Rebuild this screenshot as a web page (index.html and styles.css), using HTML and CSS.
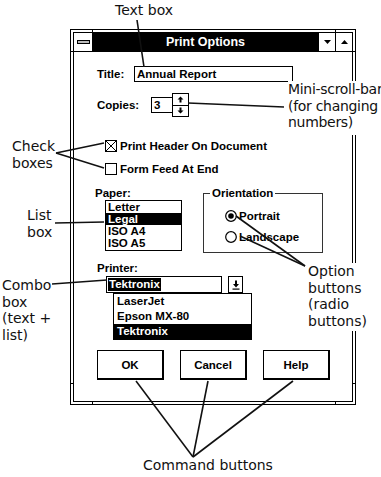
FILE: index.html
```html
<!DOCTYPE html>
<html>
  <head>
    <meta charset="UTF-8" />
    <title>Print Options</title>
    <link rel="stylesheet" href="styles.css">
  </head>
  <body>
    <div class="stage">
      <div class="window">
        <!-- resize frame corner marks -->
        <span class="tick tick-h tick-l" style="top:21px"></span>
        <span class="tick tick-h tick-r" style="top:21px"></span>
        <span class="tick tick-h tick-l" style="top:353px"></span>
        <span class="tick tick-h tick-r" style="top:353px"></span>
        <span class="tick tick-v tick-t" style="left:21px"></span>
        <span class="tick tick-v tick-t" style="left:264px"></span>
        <span class="tick tick-v tick-b" style="left:21px"></span>
        <span class="tick tick-v tick-b" style="left:264px"></span>

        <div class="frame">
          <div class="titlebar">
            <div class="sysmenu"><span class="sysbar"></span></div>
            <div class="caption">Print Options</div>
            <div class="tbtn">
              <svg width="7" height="4" viewBox="0 0 7 4"><polygon points="0,0 7,0 3.5,4" fill="#000"/></svg>
            </div>
            <div class="tbtn">
              <svg width="7" height="4" viewBox="0 0 7 4"><polygon points="0,4 7,4 3.5,0" fill="#000"/></svg>
            </div>
          </div>

          <div class="client">
            <div class="row-title">
              <span class="lbl-title">Title:</span>
              <div class="edit edit-title">Annual Report</div>
            </div>

            <div class="row-copies">
              <span class="lbl-copies">Copies:</span>
              <div class="edit edit-copies">3</div>
              <div class="spin">
                <span class="spin-half">
                  <svg width="7" height="7" viewBox="0 0 7 7"><path d="M3.5 0.5 L6.5 3.5 H4.5 V6.5 H2.5 V3.5 H0.5 Z" fill="#000"/></svg>
                </span>
                <span class="spin-half">
                  <svg width="7" height="7" viewBox="0 0 7 7"><path d="M3.5 6.5 L6.5 3.5 H4.5 V0.5 H2.5 V3.5 H0.5 Z" fill="#000"/></svg>
                </span>
              </div>
            </div>

            <div class="check-row first">
              <svg class="checkbox" width="12" height="12" viewBox="0 0 12 12">
                <rect x="0.5" y="0.5" width="11" height="11" fill="#fff" stroke="#000"/>
                <path d="M1 1 L11 11 M11 1 L1 11" stroke="#000" stroke-width="1"/>
              </svg>
              Print Header On Document
            </div>
            <div class="check-row">
              <svg class="checkbox" width="12" height="12" viewBox="0 0 12 12">
                <rect x="0.5" y="0.5" width="11" height="11" fill="#fff" stroke="#000"/>
              </svg>
              Form Feed At End
            </div>

            <div class="row-paper">
              <div class="paper">
                <div class="lbl-paper">Paper:</div>
                <ul class="listbox">
                  <li>Letter</li>
                  <li class="sel">Legal</li>
                  <li>ISO A4</li>
                  <li>ISO A5</li>
                </ul>
              </div>
              <div class="group">
                <div class="group-label">Orientation</div>
                <div class="radio-row first">
                  <svg class="radio" width="12" height="12" viewBox="0 0 12 12">
                    <circle cx="6" cy="6" r="5.3" fill="#fff" stroke="#000" stroke-width="1.2"/>
                    <circle cx="6" cy="6" r="2.8" fill="#000"/>
                  </svg>
                  Portrait
                </div>
                <div class="radio-row">
                  <svg class="radio" width="12" height="12" viewBox="0 0 12 12">
                    <circle cx="6" cy="6" r="5.3" fill="#fff" stroke="#000" stroke-width="1.2"/>
                  </svg>
                  Landscape
                </div>
              </div>
            </div>

            <div class="lbl-printer">Printer:</div>
            <div class="combo">
              <div class="edit combo-edit"><span class="hl">Tektronix</span></div>
              <div class="combo-btn">
                <svg width="8" height="10" viewBox="0 0 8 10">
                  <path d="M3 0.5 H5 V4 H7 L4 7.5 L1 4 H3 Z" fill="#000"/>
                  <rect x="0.5" y="8.5" width="7" height="1.2" fill="#000"/>
                </svg>
              </div>
            </div>
            <ul class="dropdown">
              <li>LaserJet</li>
              <li>Epson MX-80</li>
              <li class="sel">Tektronix</li>
            </ul>

            <div class="buttons">
              <div class="btn">OK</div>
              <div class="btn">Cancel</div>
              <div class="btn">Help</div>
            </div>
          </div>
        </div>
      </div>

      <!-- callout labels -->
      <div class="note note-textbox">Text box</div>
      <div class="note note-spin">Mini-scroll-bar<br>(for changing<br>numbers)</div>
      <div class="note note-check">Check<br>boxes</div>
      <div class="note note-list">List<br>box</div>
      <div class="note note-option">Option<br>buttons<br>(radio<br>buttons)</div>
      <div class="note note-combo">Combo<br>box<br>(text +<br>list)</div>
      <div class="note note-command">Command buttons</div>

      <svg class="leaders" width="381" height="477" viewBox="0 0 381 477">
        <g stroke="#111" stroke-width="1.6" fill="none">
          <line x1="137" y1="20" x2="144" y2="67"/>
          <line x1="188" y1="103" x2="284" y2="107"/>
          <line x1="56" y1="153" x2="104" y2="143"/>
          <line x1="56" y1="153" x2="104" y2="168"/>
          <line x1="55" y1="223" x2="104" y2="222"/>
          <line x1="305" y1="266" x2="236" y2="216"/>
          <line x1="305" y1="266" x2="240" y2="236"/>
          <line x1="52" y1="284" x2="107" y2="280"/>
          <line x1="193" y1="457" x2="136" y2="381"/>
          <line x1="193" y1="457" x2="208" y2="381"/>
          <line x1="193" y1="457" x2="293" y2="381"/>
        </g>
      </svg>
    </div>
  </body>
</html>
```

FILE: styles.css
```css
body {
    margin: 0;
    padding: 0;
    background-color: #fff;
    color: #000;
    font-family: "Liberation Sans", Arial, sans-serif;
}

.stage {
    position: relative;
    width: 381px;
    height: 477px;
    box-sizing: border-box;
    padding: 29px 0 0 70px;
    overflow: hidden;
}

/* window frame */
.window {
    position: relative;
    width: 286px;
    height: 376px;
    box-sizing: border-box;
    border: 1px solid #000;
    padding: 2px;
    background-color: #fff;
}

.frame {
    height: 100%;
    box-sizing: border-box;
    border: 1px solid #000;
    display: flex;
    flex-direction: column;
}

.tick {
    position: absolute;
    background-color: #000;
}

.tick-h {
    width: 4px;
    height: 1px;
}

.tick-v {
    width: 1px;
    height: 4px;
}

.tick-l { left: -1px; }
.tick-r { right: -1px; }
.tick-t { top: -1px; }
.tick-b { bottom: -1px; }

/* title bar */
.titlebar {
    display: flex;
    align-items: flex-start;
    height: 19px;
    background-color: #000;
}

.sysmenu {
    width: 18px;
    height: 18px;
    background-color: #fff;
    border-right: 1px solid #000;
    display: flex;
    align-items: center;
    justify-content: center;
}

.sysbar {
    width: 11px;
    height: 2px;
    border: 1px solid #000;
    background-color: #bbb;
}

.caption {
    flex: 1;
    color: #fff;
    font-weight: bold;
    font-size: 12.5px;
    line-height: 18px;
    text-align: center;
}

.tbtn {
    width: 16px;
    height: 18px;
    background-color: #fff;
    border-left: 1px solid #000;
    display: flex;
    align-items: center;
    justify-content: center;
}

/* dialog contents */
.client {
    padding-left: 23px;
    font-weight: bold;
    font-size: 11.5px;
}

.edit {
    height: 16px;
    box-sizing: border-box;
    border: 1px solid #000;
    line-height: 14px;
    padding-left: 2px;
}

.row-title {
    margin-top: 14px;
    height: 16px;
    display: flex;
    align-items: center;
}

.lbl-title {
    width: 37px;
}

.edit-title {
    width: 159px;
}

.row-copies {
    margin-top: 11px;
    height: 24px;
    display: flex;
    align-items: center;
}

.lbl-copies {
    width: 54px;
}

.edit-copies {
    width: 22px;
}

.spin {
    width: 17px;
    height: 24px;
    margin-left: -1px;
    box-sizing: border-box;
    border: 1px solid #000;
    display: flex;
    flex-direction: column;
}

.spin-half {
    flex: 1;
    display: flex;
    align-items: center;
    justify-content: center;
}

.spin-half + .spin-half {
    border-top: 1px solid #000;
}

.check-row {
    height: 12px;
    margin-top: 11px;
    padding-left: 8px;
    display: flex;
    align-items: center;
}

.check-row.first {
    margin-top: 23px;
}

.checkbox {
    margin-right: 3px;
}

.row-paper {
    margin-top: 11px;
    display: flex;
    align-items: flex-start;
}

.paper {
    width: 106px;
}

.lbl-paper {
    height: 14px;
    line-height: 14px;
    margin-left: -2px;
}

.listbox {
    margin: 0 0 0 8px;
    padding: 0;
    list-style: none;
    width: 77px;
    height: 51px;
    box-sizing: border-box;
    border: 1px solid #000;
}

.listbox li {
    height: 12px;
    line-height: 12px;
    padding-left: 2px;
}

.sel {
    background-color: #000;
    color: #fff;
}

.group {
    margin-top: 7px;
    width: 120px;
    height: 60px;
    box-sizing: border-box;
    border: 1px solid #333;
    padding-left: 6px;
}

.group-label {
    width: fit-content;
    margin-top: -8px;
    padding: 0 2px;
    height: 14px;
    line-height: 14px;
    background-color: #fff;
}

.radio-row {
    height: 12px;
    margin-top: 9px;
    margin-left: 15px;
    display: flex;
    align-items: center;
}

.radio-row.first {
    margin-top: 10px;
}

.radio {
    margin-right: 2px;
}

.lbl-printer {
    margin-top: 8px;
    height: 14px;
    line-height: 14px;
}

.combo {
    margin-top: 1px;
    padding-left: 9px;
    height: 17px;
    display: flex;
}

.combo-edit {
    width: 116px;
    height: 17px;
    padding: 1px;
    line-height: 13px;
}

.hl {
    display: inline-block;
    background-color: #000;
    color: #fff;
    padding: 0 1px;
}

.combo-btn {
    margin-left: 6px;
    width: 15px;
    height: 17px;
    box-sizing: border-box;
    border: 1px solid #000;
    display: flex;
    align-items: center;
    justify-content: center;
}

.dropdown {
    margin: 0 0 0 16px;
    padding: 0;
    list-style: none;
    width: 139px;
    height: 47px;
    box-sizing: border-box;
    border: 1px solid #000;
}

.dropdown li {
    height: 15px;
    line-height: 15px;
    padding-left: 3px;
}

.buttons {
    margin-top: 10px;
    display: flex;
    gap: 16px;
}

.btn {
    width: 67px;
    height: 30px;
    box-sizing: border-box;
    border: 1px solid #000;
    border-width: 1px 2px 2px 1px;
    display: flex;
    align-items: center;
    justify-content: center;
}

/* callouts */
.note {
    position: absolute;
    font-family: "DejaVu Sans", "Liberation Sans", sans-serif;
    font-size: 14px;
    line-height: 16.5px;
    color: #111;
    background-color: #fff;
    white-space: nowrap;
}

.note-textbox { left: 115px; top: 2px; }
.note-spin { left: 288px; top: 81px; padding-bottom: 4px; letter-spacing: -0.3px; }
.note-check { left: 12px; top: 138px; }
.note-list { left: 27px; top: 207px; }
.note-option { left: 308px; top: 263px; padding-bottom: 2px; }
.note-combo { left: 2px; top: 277px; }
.note-command { left: 143px; top: 457px; }

.leaders {
    position: absolute;
    left: 0;
    top: 0;
    pointer-events: none;
}
```
